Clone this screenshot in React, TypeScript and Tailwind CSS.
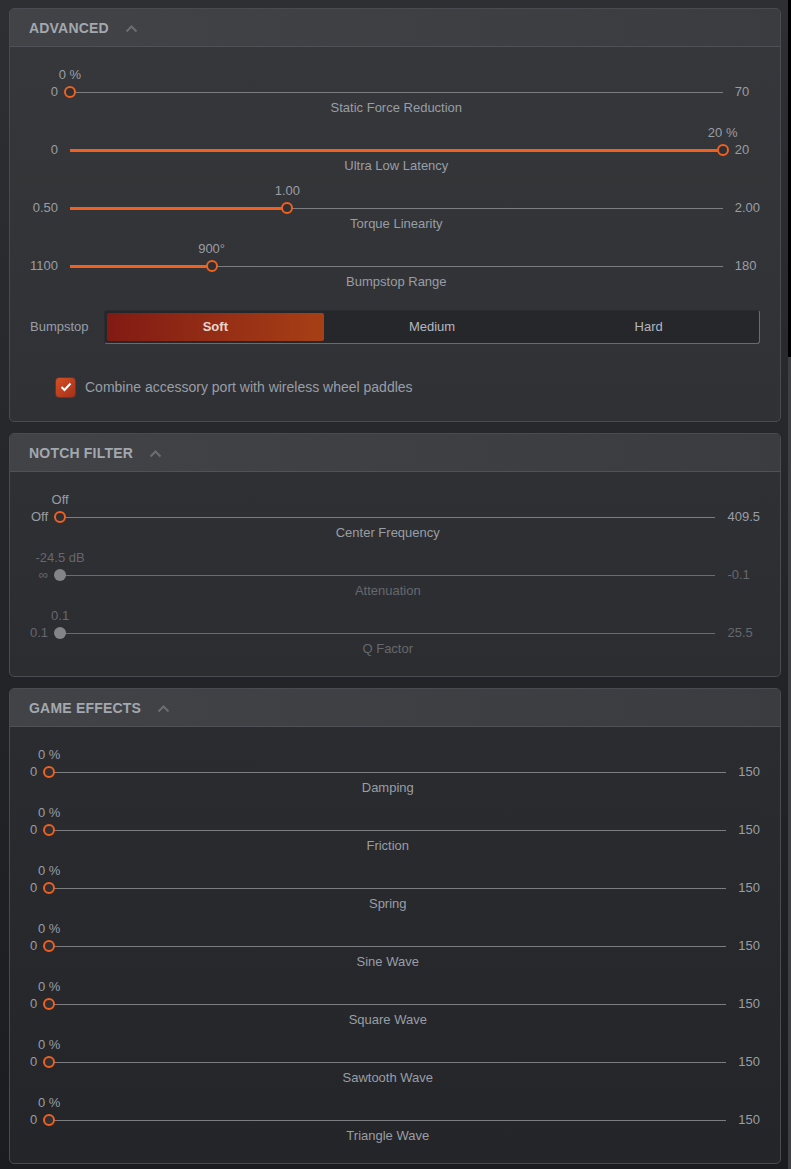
import React from 'react';

type Slider = {
  label: string;
  min: string;
  max: string;
  value: string;
  pct: number;
  disabled?: boolean;
};

const advanced: Slider[] = [
  { label: 'Static Force Reduction', min: '0', max: '70', value: '0 %', pct: 0 },
  { label: 'Ultra Low Latency', min: '0', max: '20', value: '20 %', pct: 100 },
  { label: 'Torque Linearity', min: '0.50', max: '2.00', value: '1.00', pct: 33.3 },
  { label: 'Bumpstop Range', min: '1100', max: '180', value: '900°', pct: 21.7 },
];

const notch: Slider[] = [
  { label: 'Center Frequency', min: 'Off', max: '409.5', value: 'Off', pct: 0 },
  { label: 'Attenuation', min: '∞', max: '-0.1', value: '-24.5 dB', pct: 0, disabled: true },
  { label: 'Q Factor', min: '0.1', max: '25.5', value: '0.1', pct: 0, disabled: true },
];

const effects: Slider[] = [
  'Damping',
  'Friction',
  'Spring',
  'Sine Wave',
  'Square Wave',
  'Sawtooth Wave',
  'Triangle Wave',
].map((label) => ({ label, min: '0', max: '150', value: '0 %', pct: 0 }));

const Chevron: React.FC = () => (
  <svg width="13" height="8" viewBox="0 0 13 8">
    <path d="M1.5 6.5 L6.5 1.5 L11.5 6.5" fill="none" stroke="#6c6d72" strokeWidth="2" />
  </svg>
);

const Panel: React.FC<{ title: string; pb?: string; children: React.ReactNode }> = ({
  title,
  pb = 'pb-5',
  children,
}) => (
  <section className="overflow-hidden rounded-[5px] border border-[#4a4b50] bg-white/[0.045]">
    <header className="flex h-[38px] items-center gap-[16px] border-b border-[#505156] bg-gradient-to-r from-[#424347] to-[#3b3c40] pl-[19px] pt-[2px]">
      <h2 className="text-[14px] font-bold tracking-[0.2px] text-[#a3a8af]">{title}</h2>
      <Chevron />
    </header>
    <div className={`px-5 pt-5 ${pb}`}>{children}</div>
  </section>
);

const SliderGrid: React.FC<{ items: Slider[] }> = ({ items }) => (
  <div className="grid grid-cols-[auto_1fr_auto] gap-x-[6px] text-[13px]">
    {items.map((s, i) => {
      const last = i === items.length - 1;
      const text = s.disabled ? 'text-[#65686e]' : 'text-[#989ea6]';
      return (
        <React.Fragment key={s.label}>
          <div />
          <div className="relative mx-[6px] h-4">
            <span
              className={`absolute top-0 -translate-x-1/2 whitespace-nowrap leading-4 ${text}`}
              style={{ left: `${s.pct}%` }}
            >
              {s.value}
            </span>
          </div>
          <div />

          <div className={`h-[18px] text-right leading-[18px] ${text}`}>{s.min}</div>
          <div className="relative mx-[6px] h-[18px]">
            <div className={`absolute inset-x-0 top-[9px] h-px ${s.disabled ? 'bg-[#6a6b6f]' : 'bg-[#7c7d81]'}`} />
            {!s.disabled && (
              <div className="absolute left-0 top-[8px] h-[3px] bg-[#f0601f]" style={{ width: `${s.pct}%` }} />
            )}
            <div
              className={`absolute top-[3px] h-3 w-3 -translate-x-1/2 rounded-full ${
                s.disabled ? 'bg-[#838488]' : 'border-2 border-[#f0601f] bg-[#2f3034]'
              }`}
              style={{ left: `${s.pct}%` }}
            />
          </div>
          <div className={`leading-[18px] ${text}`}>{s.max}</div>

          <div />
          <div className={`h-[14px] text-center leading-[14px] ${text} ${last ? '' : 'mb-[10px]'}`}>
            {s.label}
          </div>
          <div />
        </React.Fragment>
      );
    })}
  </div>
);

export default function App() {
  return (
    <div className="flex min-h-screen bg-gradient-to-b from-[#2e2f33] to-[#1b1c1f] font-['Liberation_Sans',Arial,sans-serif]">
      <main className="flex flex-1 flex-col gap-[11px] pb-[6px] pl-[9px] pr-[7px] pt-[8px]">
        <Panel title="ADVANCED" pb="pb-[24px]">
          <SliderGrid items={advanced} />
          <div className="mt-[21px] flex items-center">
            <span className="w-[74px] text-[13px] text-[#989ea6]">Bumpstop</span>
            <div className="flex h-[34px] flex-1 rounded-[3px] border border-[#2a2b2e] border-b-[#6a6b70] border-r-[#6a6b70] bg-[#26272b] p-[2px] text-[13px]">
              <button className="flex-1 rounded-[2px] bg-gradient-to-r from-[#821a14] to-[#a73f15] font-bold text-[#e8d6cc]">
                Soft
              </button>
              <button className="flex-1 text-[#b3b8bf]">Medium</button>
              <button className="flex-1 text-[#b3b8bf]">Hard</button>
            </div>
          </div>
          <label className="ml-[25px] mt-[33px] flex h-5 items-center gap-[9px]">
            <span className="flex h-[21px] w-[21px] items-center justify-center rounded-[4px] border border-[#5b3a2f] bg-gradient-to-br from-[#d64f22] to-[#a5301a]">
              <svg width="12" height="10" viewBox="0 0 12 10">
                <path d="M1.5 5 L4.5 8 L10.5 1.5" fill="none" stroke="#fff" strokeWidth="2" />
              </svg>
            </span>
            <span className="text-[14px] text-[#989ea6]">Combine accessory port with wireless wheel paddles</span>
          </label>
        </Panel>

        <Panel title="NOTCH FILTER">
          <SliderGrid items={notch} />
        </Panel>

        <Panel title="GAME EFFECTS">
          <SliderGrid items={effects} />
        </Panel>
      </main>
      <div className="flex w-[3px] flex-col">
        <div className="h-[357px] bg-black" />
        <div className="flex-1 bg-[#3e3f43]" />
      </div>
    </div>
  );
}
